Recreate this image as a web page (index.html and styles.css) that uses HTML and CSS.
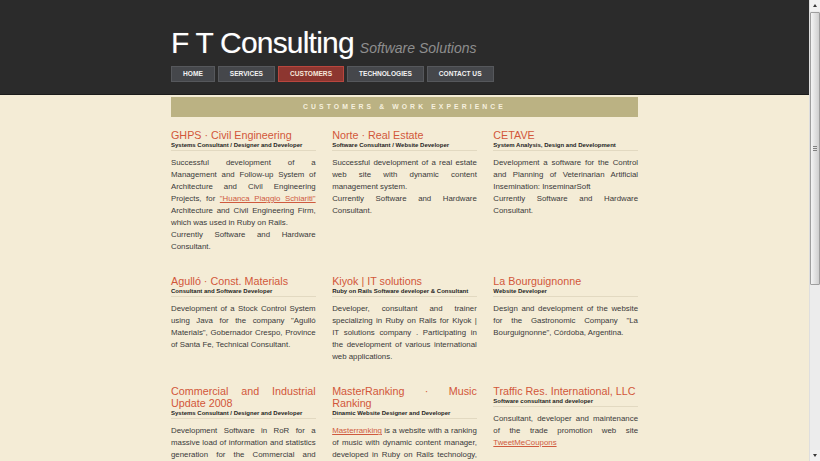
FILE: index.html
```html
<!DOCTYPE html>
<html lang="en">
<head>
<meta charset="utf-8">
<title>F T Consulting - Customers</title>
<link rel="stylesheet" href="styles.css">
</head>
<body>
<div class="viewport">
  <div class="page">
    <header class="site-header">
      <div class="wrap">
        <div class="brand">
          <span class="brand-name">F T Consulting</span>
          <span class="brand-tag">Software Solutions</span>
        </div>
        <nav class="nav">
          <a class="nav-item" href="#">HOME</a>
          <a class="nav-item" href="#">SERVICES</a>
          <a class="nav-item active" href="#">CUSTOMERS</a>
          <a class="nav-item" href="#">TECHNOLOGIES</a>
          <a class="nav-item" href="#">CONTACT US</a>
        </nav>
      </div>
    </header>
    <main class="wrap">
      <div class="section-bar">CUSTOMERS &amp; WORK EXPERIENCE</div>
      <div class="grid">
        <article class="item">
          <h2 class="item-title">GHPS · Civil Engineering</h2>
          <p class="item-role">Systems Consultant / Designer and Developer</p>
          <p class="item-desc">Successful development of a Management and Follow-up System of Architecture and Civil Engineering Projects, for <a href="#">"Huanca Piaggio Schiariti"</a> Architecture and Civil Engineering Firm, which was used in Ruby on Rails.<br>Currently Software and Hardware Consultant.</p>
        </article>
        <article class="item">
          <h2 class="item-title">Norte · Real Estate</h2>
          <p class="item-role">Software Consultant / Website Developer</p>
          <p class="item-desc">Successful development of a real estate web site with dynamic content management system.<br>Currently Software and Hardware Consultant.</p>
        </article>
        <article class="item">
          <h2 class="item-title">CETAVE</h2>
          <p class="item-role">System Analysis, Design and Development</p>
          <p class="item-desc">Development a software for the Control and Planning of Veterinarian Artificial Insemination: InseminarSoft<br>Currently Software and Hardware Consultant.</p>
        </article>
        <article class="item">
          <h2 class="item-title">Agulló · Const. Materials</h2>
          <p class="item-role">Consultant and Software Developer</p>
          <p class="item-desc">Development of a Stock Control System using Java for the company "Agulló Materials", Gobernador Crespo, Province of Santa Fe, Technical Consultant.</p>
        </article>
        <article class="item">
          <h2 class="item-title">Kiyok | IT solutions</h2>
          <p class="item-role">Ruby on Rails Software developer &amp; Consultant</p>
          <p class="item-desc">Developer, consultant and trainer specializing in Ruby on Rails for Kiyok | IT solutions company . Participating in the development of various international web applications.</p>
        </article>
        <article class="item">
          <h2 class="item-title">La Bourguignonne</h2>
          <p class="item-role">Website Developer</p>
          <p class="item-desc">Design and development of the website for the Gastronomic Company "La Bourguignonne", Córdoba, Argentina.</p>
        </article>
        <article class="item">
          <h2 class="item-title">Commercial and Industrial Update 2008</h2>
          <p class="item-role">Systems Consultant / Designer and Developer</p>
          <p class="item-desc">Development Software in RoR for a massive load of information and statistics generation for the Commercial and Industrial Update 2008 of the Province.</p>
        </article>
        <article class="item">
          <h2 class="item-title">MasterRanking · Music Ranking</h2>
          <p class="item-role">Dinamic Website Designer and Developer</p>
          <p class="item-desc"><a href="#">Masterranking</a> is a website with a ranking of music with dynamic content manager, developed in Ruby on Rails technology, with user votes and statistics.</p>
        </article>
        <article class="item">
          <h2 class="item-title">Traffic Res. International, LLC</h2>
          <p class="item-role">Software consultant and developer</p>
          <p class="item-desc">Consultant, developer and maintenance of the trade promotion web site <a href="#">TweetMeCoupons</a></p>
        </article>
      </div>
    </main>
  </div>
  <div class="scrollbar" aria-hidden="true">
    <div class="sb-btn"><span class="sb-arrow up"></span></div>
    <div class="sb-thumb"><span class="sb-grip"></span></div>
    <div class="sb-track"></div>
    <div class="sb-btn"><span class="sb-arrow down"></span></div>
  </div>
</div>
</body>
</html>
```
FILE: styles.css
```css
html, body {
  margin: 0;
  padding: 0;
  height: 100%;
  overflow: hidden;
}
body {
  background: #f4ecd6;
  font-family: "Liberation Sans", Arial, sans-serif;
  color: #3a3a3a;
}
.viewport {
  display: flex;
  height: 461px;
}
.page {
  flex: 1;
  overflow: hidden;
  min-width: 0;
}
.wrap {
  width: 467px;
  margin: 0 auto;
}
.site-header {
  background: #2b2b2b;
  border-bottom: 1px solid #1b1b1b;
  padding: 25px 0 12px;
}
.brand {
  display: flex;
  align-items: baseline;
  height: 36px;
  line-height: 36px;
}
.brand-name {
  font-size: 30px;
  color: #ffffff;
  letter-spacing: -0.8px;
  text-shadow: 0 0 1px rgba(255,255,255,0.35);
}
.brand-tag {
  font-size: 14px;
  font-style: italic;
  color: #8e8e8e;
  margin-left: 6px;
}
.nav {
  display: flex;
  gap: 3px;
  margin-top: 5px;
}
.nav-item {
  display: block;
  height: 14px;
  line-height: 14px;
  padding: 0 11px;
  border: 1px solid #56585c;
  background: #45474b;
  color: #f2f2f2;
  font-size: 6.6px;
  font-weight: bold;
  text-decoration: none;
}
.nav-item.active {
  background: #8d3630;
  border-color: #b9463e;
  color: #f6e6dc;
}
.section-bar {
  margin-top: 2px;
  height: 20px;
  line-height: 20px;
  background: #bbb283;
  color: #f6f0de;
  font-size: 6.8px;
  font-weight: bold;
  letter-spacing: 3.1px;
  text-align: center;
}
.grid {
  display: grid;
  grid-template-columns: repeat(3, 1fr);
  column-gap: 16.5px;
  row-gap: 22px;
  margin-top: 12px;
}
.item {
  text-align: justify;
}
.item-title {
  margin: 0;
  font-size: 10.75px;
  line-height: 12px;
  font-weight: normal;
  color: #d2573a;
}
.item-role {
  margin: 0;
  font-size: 6px;
  line-height: 9px;
  font-weight: bold;
  color: #1e1e1e;
  text-align: left;
  border-bottom: 1px solid #e2d9c1;
}
.item-desc {
  margin: 6px 0 0;
  font-size: 7.85px;
  line-height: 12px;
  color: #3a3a3a;
}
.item-desc a {
  color: #cf5a3e;
  text-decoration: underline;
}
.scrollbar {
  width: 11px;
  flex: none;
  display: flex;
  flex-direction: column;
  background: #ececec;
  border-left: 1px solid #dedede;
  box-sizing: border-box;
}
.sb-btn {
  height: 11px;
  display: flex;
  align-items: center;
  justify-content: center;
  background: #f2f2f2;
}
.sb-arrow {
  width: 0;
  height: 0;
  border-left: 2.5px solid transparent;
  border-right: 2.5px solid transparent;
}
.sb-arrow.up {
  border-bottom: 3px solid #3a3a3a;
}
.sb-arrow.down {
  border-top: 3px solid #3a3a3a;
}
.sb-thumb {
  height: 271px;
  margin-top: 1px;
  border: 1px solid #9e9e9e;
  border-radius: 1px;
  background: linear-gradient(to right, #f4f4f4, #cfcfcf);
  display: flex;
  align-items: center;
  justify-content: center;
}
.sb-grip {
  width: 4px;
  height: 5px;
  background: repeating-linear-gradient(to bottom, #808080 0 1px, transparent 1px 2px);
}
.sb-track {
  flex: 1;
}
```
